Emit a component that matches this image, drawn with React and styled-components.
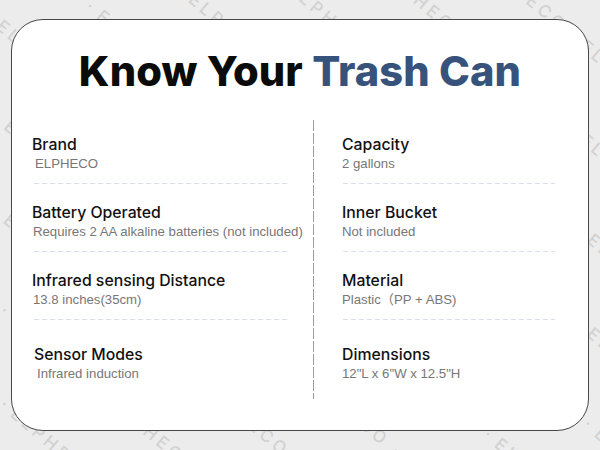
import React from "react";
import styled, { createGlobalStyle } from "styled-components";

const Global = createGlobalStyle`
  html, body { margin: 0; padding: 0; }
  body { width: 600px; height: 450px; overflow: hidden; background: #ececec; }
`;

const Page = styled.div`
  position: relative;
  width: 600px;
  height: 450px;
  overflow: hidden;
  background: #ececec;
  padding: 19px 11px;
  box-sizing: border-box;
`;

const Watermark = styled.div`
  position: absolute;
  left: -250px;
  top: -250px;
  width: 1100px;
  height: 950px;
  display: grid;
  grid-template-columns: repeat(8, 130px);
  grid-auto-rows: 72px;
  transform: rotate(40deg);
  pointer-events: none;
`;

const Mark = styled.span`
  font-family: "Inter", "Liberation Sans", sans-serif;
  font-weight: 500;
  font-size: 17px;
  letter-spacing: 4px;
  color: #d2d2d2;
  padding-left: ${(p) => (p.$shift ? 60 : 0)}px;
  white-space: nowrap;
`;

const Card = styled.div`
  position: relative;
  height: 412px;
  box-sizing: border-box;
  border: 1.5px solid #474747;
  border-radius: 32px;
  background: #ffffff;
  padding: 27px 20px 0 20px;
`;

const Title = styled.h1`
  margin: 0;
  text-align: center;
  font-family: "Inter", "Liberation Sans", sans-serif;
  font-weight: 800;
  font-size: 41.6px;
  line-height: 49px;
  letter-spacing: 0.1px;
  color: #0b0b0b;
`;

const Accent = styled.span`
  color: #37537c;
`;

const Columns = styled.div`
  display: grid;
  grid-template-columns: 271px 1px 1fr;
  column-gap: 10px;
  margin-top: 24px;
`;

const RightCol = styled.div`
  padding-left: 18px;
`;

const Col = styled.div`
  padding-top: 15px;
  padding-bottom: 17px;
`;

const Divider = styled.div`
  width: 1px;
  background: repeating-linear-gradient(to bottom, #9d9d9d 0 11px, transparent 11px 13px);
`;

const Item = styled.div`
  margin-top: ${(p) => p.$top}px;
`;

const Label = styled.div`
  font-family: "Inter", "Liberation Sans", sans-serif;
  font-weight: 500;
  font-size: 15.8px;
  line-height: 20px;
  color: #111;
  padding-left: ${(p) => p.$indent || 0}px;
`;

const Value = styled.div`
  margin-top: 1px;
  font-family: "Liberation Sans", Arial, "Noto Sans CJK SC", sans-serif;
  font-size: 13.2px;
  line-height: 16px;
  color: #777777;
  white-space: nowrap;
  padding-left: ${(p) => p.$indent || 0}px;
`;

const Sep = styled.div`
  margin-top: 11px;
  margin-left: ${(p) => p.$left}px;
  width: ${(p) => p.$width}px;
  height: 1px;
  background: repeating-linear-gradient(to right, #d8dfe8 0 5px, transparent 5px 8px);
`;

const left = [
  { label: "Brand", value: "ELPHECO", vIndent: 3 },
  { label: "Battery Operated", value: "Requires 2 AA alkaline batteries (not included)", vIndent: 1 },
  { label: "Infrared sensing Distance", value: "13.8 inches(35cm)", vIndent: 1 },
  { label: "Sensor Modes", value: "Infrared induction", lIndent: 2, vIndent: 5 },
];

const right = [
  { label: "Capacity", value: "2 gallons" },
  { label: "Inner Bucket", value: "Not included" },
  { label: "Material", value: "Plastic（PP + ABS)" },
  { label: "Dimensions", value: "12\"L x 6\"W x 12.5\"H" },
];

function List({ items, sepLeft, sepWidth }) {
  return items.map((it, i) => {
    const last = i === items.length - 1;
    return (
      <Item key={it.label} $top={i === 0 ? 0 : last ? 25 : 19}>
        <Label $indent={it.lIndent}>{it.label}</Label>
        <Value $indent={it.vIndent}>{it.value}</Value>
        {!last && <Sep $left={sepLeft} $width={sepWidth} />}
      </Item>
    );
  });
}

export default function App() {
  const marks = Array.from({ length: 8 * 13 }, (_, i) => i);
  return (
    <Page>
      <Global />
      <Watermark>
        {marks.map((i) => (
          <Mark key={i} $shift={Math.floor(i / 8) % 2 === 1}>ELPHECO ·</Mark>
        ))}
      </Watermark>
      <Card>
        <Title>
          Know Your <Accent>Trash Can</Accent>
        </Title>
        <Columns>
          <Col>
            <List items={left} sepLeft={2} sepWidth={254} />
          </Col>
          <Divider />
          <RightCol>
            <Col>
              <List items={right} sepLeft={1} sepWidth={212} />
            </Col>
          </RightCol>
        </Columns>
      </Card>
    </Page>
  );
}
